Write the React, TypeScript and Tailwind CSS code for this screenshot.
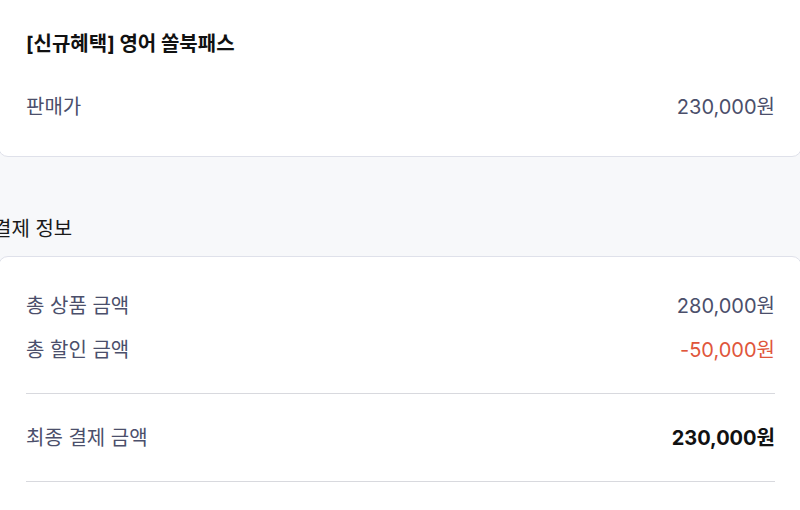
const FONT = "font-['Inter','Noto_Sans_CJK_KR',sans-serif]";

function Row({ label, value, valueClass }: { label: string; value: string; valueClass?: string }) {
  return (
    <div className="flex items-center justify-between h-[28px]">
      <span className="text-[#4b4f6b]">{label}</span>
      <span className={valueClass ?? "text-[#4b4f6b]"}>{value}</span>
    </div>
  );
}

export default function App() {
  return (
    <div className={`${FONT} w-[800px] h-[510px] overflow-hidden bg-[#f7f8fa] text-[20px] leading-[28px]`}>
      {/* Product card */}
      <div className="-mt-4 -mx-[2px] bg-white border border-[#dfe1ea] rounded-[10px] pl-[27px] pr-[26px] pt-[45px] pb-[35px]">
        <div className="h-[28px] font-bold text-[#111111]">[신규혜택] 영어 쏠북패스</div>
        <div className="mt-[35px]">
          <Row label="판매가" value="230,000원" />
        </div>
      </div>

      {/* Payment info */}
      <div className="mt-[58px] -ml-[7px] h-[28px] text-[#1a1a1a]">결제 정보</div>
      <div className="mt-[13px] -mx-[2px] bg-white border border-[#dfe1ea] rounded-[10px] pl-[27px] pr-[26px] pt-[35px] pb-10">
        <Row label="총 상품 금액" value="280,000원" />
        <div className="mt-[16px]">
          <Row label="총 할인 금액" value="-50,000원" valueClass="text-[#e0563b]" />
        </div>
        <div className="mt-[29px] h-px bg-[#d8d9de]" />
        <div className="mt-[30px]">
          <Row label="최종 결제 금액" value="230,000원" valueClass="font-bold text-[#111111]" />
        </div>
        <div className="mt-[29px] h-px bg-[#d8d9de]" />
      </div>
    </div>
  );
}
